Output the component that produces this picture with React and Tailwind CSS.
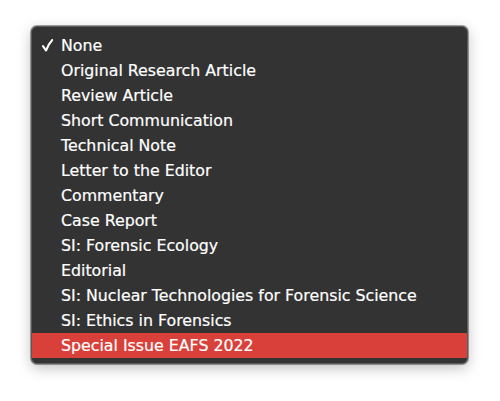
const items = [
  "None",
  "Original Research Article",
  "Review Article",
  "Short Communication",
  "Technical Note",
  "Letter to the Editor",
  "Commentary",
  "Case Report",
  "SI: Forensic Ecology",
  "Editorial",
  "SI: Nuclear Technologies for Forensic Science",
  "SI: Ethics in Forensics",
  "Special Issue EAFS 2022",
];

function Check() {
  return (
    <svg width="11" height="13" viewBox="0 0 11 13" className="block">
      <path
        d="M1 7.2 L4 11.5 Q6.5 5 10.3 1"
        fill="none"
        stroke="white"
        strokeWidth="2.1"
        strokeLinecap="round"
        strokeLinejoin="round"
      />
    </svg>
  );
}

export default function App() {
  const selected = "None";
  const highlighted = "Special Issue EAFS 2022";

  return (
    <div className="w-[500px] h-[401px] bg-white pt-[26px] pl-[31px]">
      <div className="w-[437px] rounded-[6px] bg-[#333333] border border-[#5c5c5c] shadow-[0_0_0_1px_rgba(0,0,0,0.35),0_4px_14px_rgba(0,0,0,0.25)] pt-[6px] pb-[5px] font-['DejaVu_Sans',sans-serif] text-[15.8px] text-white">
        {items.map((item) => (
          <div
            key={item}
            className={`flex items-center h-[25px] ${
              item === highlighted ? "bg-[#d9403a]" : ""
            }`}
          >
            <span className="w-[29px] pl-[10px]">
              {item === selected ? <Check /> : null}
            </span>
            <span className="[-webkit-text-stroke:0.2px_white]">{item}</span>
          </div>
        ))}
      </div>
    </div>
  );
}
